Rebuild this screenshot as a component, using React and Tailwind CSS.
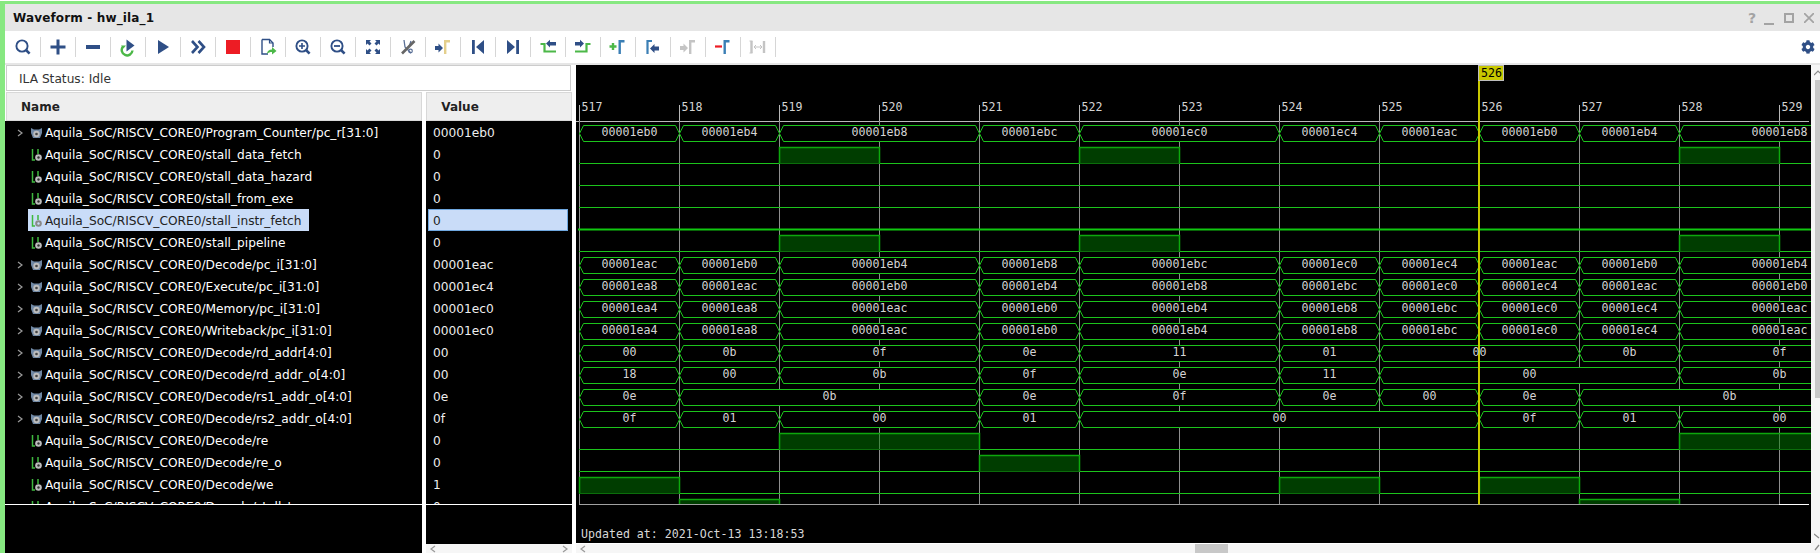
import React from 'react';
import { FaCog } from 'react-icons/fa';

const NAVY = '#2f4f86';
const GRN = '#4cb848';
const MK = '#3b7fb5';
const GY = '#c4c4c4';

const Mag = ({ children }) => (
  <>
    <circle cx="9" cy="9" r="5.6" fill="none" stroke={NAVY} strokeWidth="1.9" />
    <path d="M13 13l3.6 3.6" stroke={NAVY} strokeWidth="2.6" />
    {children}
  </>
);
const Marker = ({ x = 11, c = MK }) => <path d={`M${x + 1.2} 17V4.2H${x + 6}`} fill="none" stroke={c} strokeWidth="2.4" />;
const ArrowR = ({ x, y, c = NAVY }) => <path d={`M${x} ${y - 2}h3.5v-2.6l4.5 4.6-4.5 4.6V${y + 2}H${x}z`} fill={c} />;

const icons = [
  <Mag />,
  <path d="M2.5 8.5h6v-6h3v6h6v3h-6v6h-3v-6h-6z" fill={NAVY} />,
  <rect x="3" y="8" width="14" height="4" fill={NAVY} />,
  <>
    <path d="M5 9.5a5.4 5.4 0 1 0 9.5 4" fill="none" stroke={GRN} strokeWidth="2.4" />
    <path d="M3 8.5h5l-2.5 3z" fill={GRN} />
    <path d="M8.5 2.5l8 6-8 6z" fill={NAVY} />
  </>,
  <path d="M5 3l11 7-11 7z" fill={NAVY} />,
  <path d="M4 4l5.5 6L4 16M10.5 4l5.5 6-5.5 6" fill="none" stroke={NAVY} strokeWidth="2.6" />,
  <rect x="3" y="3" width="14" height="14" fill="#ed1c24" />,
  <>
    <path d="M4 2.5h7.5l3.5 3.5v4M4 2.5v14.5h6" fill="none" stroke={NAVY} strokeWidth="1.4" />
    <path d="M11.5 2.5V6H15" fill="none" stroke={NAVY} strokeWidth="1.2" />
    <path d="M9 17c0-3 2-4.5 5-4.5V10l4.5 4-4.5 3.500V15c-2 0-3.500.5-5 2z" fill={GRN} />
  </>,
  <Mag><path d="M6 9h6M9 6v6" stroke={NAVY} strokeWidth="1.6" /></Mag>,
  <Mag><path d="M6 9h6" stroke={NAVY} strokeWidth="1.8" /></Mag>,
  <path d="M3 3h5L6.500 4.500 8.500 6.500 6.500 8.500 4.500 6.500 3 8zM17 3v5L15.500 6.500 13.500 8.500 11.500 6.500 13.500 4.500 12 3zM3 17v-5l1.500 1.500 2-2 2 2-2 2L8 17zM17 17h-5l1.500-1.500-2-2 2-2 2 2L17 12z" fill={NAVY} />,
  <>
    <path d="M6 3l1 7 6 6M13 4l-2 6" fill="none" stroke="#5a6f96" strokeWidth="1.3" />
    <path d="M4 16.500L16.500 4" stroke="#666" strokeWidth="2.6" />
    <circle cx="12.500" cy="14" r="1.800" fill="none" stroke="#5a6f96" strokeWidth="1.200" />
  </>,
  <><ArrowR x={2} y={11} /><Marker x={11} c="#e4cf8c" /></>,
  <path d="M4 3h2.800v14H4zM16 3v14L8 10z" fill={NAVY} />,
  <path d="M16 3h-2.800v14H16zM4 3v14l8-7z" fill={NAVY} />,
  <>
    <path d="M2.500 7h4v7.500h11.500" fill="none" stroke={GRN} strokeWidth="2.200" />
    <path d="M8 6.500l4-3.700V5h6v3.500h-6v2z" fill={NAVY} />
  </>,
  <>
    <path d="M2 14.500h11.500V7h4" fill="none" stroke={GRN} strokeWidth="2.200" />
    <path d="M11 6.500L7 2.800V5H2v3.500h5v2z" fill={NAVY} />
  </>,
  <>
    <path d="M1.500 9.500h7M5 6v7" stroke={GRN} strokeWidth="2.400" />
    <Marker x={10.500} />
  </>,
  <>
    <path d="M4.500 17V4H9" fill="none" stroke={MK} strokeWidth="2.200" />
    <path d="M7 11.500l4.500-4.500v2.500H16v4h-4.500V16z" fill={NAVY} />
  </>,
  <><ArrowR x={2} y={11} c={GY} /><Marker x={11} c={GY} /></>,
  <>
    <path d="M2 9.500h7" stroke="#ed1c24" strokeWidth="2.200" />
    <Marker x={10.500} />
  </>,
  <>
    <path d="M3.500 4v12M16 4v12" stroke={GY} strokeWidth="2.400" />
    <path d="M1.500 4h3M1.500 16h3" stroke={GY} strokeWidth="1" />
    <path d="M6 10h8M6 10l2-2M6 10l2 2M14 10l-2-2M14 10l-2 2" stroke={GY} strokeWidth="1" fill="none" />
  </>,
];

const rows = [
  ['Program_Counter/pc_r[31:0]', '00001eb0', 1],
  ['stall_data_fetch', '0'],
  ['stall_data_hazard', '0'],
  ['stall_from_exe', '0'],
  ['stall_instr_fetch', '0'],
  ['stall_pipeline', '0'],
  ['Decode/pc_i[31:0]', '00001eac', 1],
  ['Execute/pc_i[31:0]', '00001ec4', 1],
  ['Memory/pc_i[31:0]', '00001ec0', 1],
  ['Writeback/pc_i[31:0]', '00001ec0', 1],
  ['Decode/rd_addr[4:0]', '00', 1],
  ['Decode/rd_addr_o[4:0]', '00', 1],
  ['Decode/rs1_addr_o[4:0]', '0e', 1],
  ['Decode/rs2_addr_o[4:0]', '0f', 1],
  ['Decode/re', '0'],
  ['Decode/re_o', '0'],
  ['Decode/we', '1'],
  ['Decode/stall_t', '0'],
];

const h = (s) => s.split(' ').map((t) => {
  const [v, n] = t.split(':');
  return [v.length === 3 ? '00001' + v : v, Number(n || 1)];
});

const waves = [
  h('eb0 eb4 eb8:2 ebc ec0:2 ec4 eac eb0 eb4 eb8:2'),
  [[2, 3], [5, 6], [11, 12]],
  [],
  [],
  'thick',
  [[2, 3], [5, 6], [11, 12]],
  h('eac eb0 eb4:2 eb8 ebc:2 ec0 ec4 eac eb0 eb4:2'),
  h('ea8 eac eb0:2 eb4 eb8:2 ebc ec0 ec4 eac eb0:2'),
  h('ea4 ea8 eac:2 eb0 eb4:2 eb8 ebc ec0 ec4 eac:2'),
  h('ea4 ea8 eac:2 eb0 eb4:2 eb8 ebc ec0 ec4 eac:2'),
  h('00 0b 0f:2 0e 11:2 01 00:2 0b 0f:2'),
  h('18 00 0b:2 0f 0e:2 11 00:3 0b:2'),
  h('0e 0b:3 0e 0f:2 0e 00 0e 0b:3'),
  h('0f 01 00:2 01 00:4 0f 01 00:2'),
  [[2, 4], [11, 14]],
  [[4, 5]],
  [[0, 1], [7, 8], [9, 10]],
  [[1, 2], [10, 11]],
];

const X = (k) => 579.5 + 100 * k;
const LINE = '#1cc41c';

function BusIcon() {
  return (
    <svg width="13" height="12" viewBox="0 0 13 12" className="shrink-0">
      <path d="M1 1l3 1.500h5L12 1v5l-2 5H3L1 6z" fill="#6f87a3" />
      <circle cx="6.500" cy="7" r="3.200" fill="#bdbdbd" />
      <circle cx="6.500" cy="7" r="1.300" fill="#444" />
    </svg>
  );
}
function BitIcon({ light }) {
  return (
    <svg width="13" height="14" viewBox="0 0 13 14" className="shrink-0">
      <path d="M2.500 1v11h2.500M8 1v5" fill="none" stroke="#3fb83f" strokeWidth="1.500" />
      <circle cx="8.500" cy="9.500" r="3.300" fill={light ? '#8a8a8a' : '#bdbdbd'} />
      <circle cx="8.500" cy="9.500" r="1.200" fill={light ? '#c9dcf8' : '#333'} />
    </svg>
  );
}

function Wave() {
  const bars = [];
  const rails = [];
  const buses = [];
  const labels = [];
  waves.forEach((w, n) => {
    const top = 125.5 + 22 * n;
    const bot = 141.5 + 22 * n;
    if (w === 'thick') {
      rails.push(<path key={n} d={`M578 ${bot}H1811`} stroke="#10c810" strokeWidth="2" />);
    } else if (typeof w[0]?.[0] === 'string') {
      let k = 0;
      w.forEach(([label, len], i) => {
        const a = X(k);
        const b = X(k + len);
        const c = (top + bot) / 2;
        buses.push(
          <polygon key={`${n}-${i}`} points={`${a},${c} ${a + 4},${top} ${b - 4},${top} ${b},${c} ${b - 4},${bot} ${a + 4},${bot}`} fill="#000" stroke={LINE} strokeWidth="1" />
        );
        labels.push(
          <text key={`${n}-${i}`} x={(a + b) / 2} y={c + 2.500} textAnchor="middle" fill="#d4d4d4" style={{ fontFamily: '"DejaVu Sans Mono", monospace', fontSize: '11.600px' }}>{label}</text>
        );
        k += len;
      });
    } else {
      rails.push(<path key={n} d={`M579 ${bot}H1811`} stroke={LINE} strokeWidth="1" />);
      w.forEach(([s, e], i) => {
        const a = X(s);
        const b = Math.min(X(e), 1813);
        bars.push(
          <g key={`${n}-${i}`}>
            <rect x={a} y={top} width={b - a} height={16} fill="#008000" fillOpacity="0.48" />
            <path d={`M${b} ${bot}V${top}H${a}V${bot}`} fill="none" stroke="#0da80d" strokeWidth="1.500" />
            <path d={`M${a} ${bot}H${b}`} stroke="#0b6d0b" strokeWidth="1" />
          </g>
        );
      });
    }
  });
  const ticks = Array.from({ length: 13 }, (_, i) => i);
  return (
    <svg width="1235" height="478" viewBox="576 65 1235 478" className="block">
      <defs>
        <clipPath id="wv"><rect x="576" y="121" width="1235" height="383" /></clipPath>
      </defs>
      <rect x="576" y="65" width="1235" height="478" fill="#000" />
      <path d="M576 121.500H1809" stroke="#b8b8b8" strokeWidth="1" />
      <path d="M579 504.500H1779" stroke="#a0a0a0" strokeWidth="1" />
      <path d="M1779 504.500H1809" stroke="#fff" strokeWidth="1" />
      {ticks.map((i) => (
        <g key={i}>
          <path d={`M${X(i)} 105V121`} stroke="#b8b8b8" strokeWidth="1" />
          <path d={`M${X(i)} 121V504`} stroke="#8f8f8f" strokeWidth="1" />
          <text x={X(i) + 2} y="111" fill="#d4d4d4" style={{ fontFamily: '"DejaVu Sans Mono", monospace', fontSize: '11.600px' }}>{517 + i}</text>
        </g>
      ))}
      <g clipPath="url(#wv)">
        {rails}
        {bars}
        {buses}
      </g>
      <rect x="1478" y="80" width="2" height="424.500" fill="#c8c800" />
      <g clipPath="url(#wv)">{labels}</g>
      <rect x="1478.500" y="65.500" width="25" height="15" fill="#c8c800" stroke="#bdbdbd" strokeWidth="1" />
      <text x="1481" y="77" fill="#000" style={{ fontFamily: '"DejaVu Sans Mono", monospace', fontSize: '11.600px' }}>526</text>
      <text x="581" y="538" fill="#d8d8d8" style={{ fontFamily: '"DejaVu Sans Mono", monospace', fontSize: '11.600px' }}>Updated at: 2021-Oct-13 13:18:53</text>
    </svg>
  );
}

const Chev = ({ dir = 'l', color = '#9a9a9a' }) => (
  <svg width="6" height="8" viewBox="0 0 6 8" className="shrink-0">
    <path d={dir === 'l' ? 'M5 1L1 4l4 3' : 'M1 1l4 3-4 3'} fill="none" stroke={color} strokeWidth="1.200" />
  </svg>
);

export default function App() {
  const sans = { fontFamily: '"DejaVu Sans", sans-serif' };
  return (
    <div className="w-[1820px] h-[553px] bg-white overflow-hidden pt-px" style={sans}>
      <div className="h-[552px] flex flex-col border-t-[3px] border-l-[5px] border-[#87e881]">
        <div className="h-[27px] shrink-0 bg-[#e6e6e6] flex items-center pl-2 pr-1.5">
          <span className="text-[12px] font-bold text-[#111] tracking-[0.15px]">Waveform - hw_ila_1</span>
          <div className="ml-auto flex items-center text-[#a3a3a3]">
            <span className="w-5 text-center text-[14px] font-bold leading-none pl-[6px]">?</span>
            <div className="w-5 h-[15px] flex items-end justify-center"><div className="w-[10px] h-[2px] bg-[#a3a3a3]" /></div>
            <div className="w-5 flex justify-center"><div className="w-[10px] h-[10px] border-2 border-[#a3a3a3]" /></div>
            <svg width="10" height="10" viewBox="0 0 10 10" className="ml-[5px]"><path d="M0 0l10 10M10 0L0 10" stroke="#a3a3a3" strokeWidth="1.700" /></svg>
          </div>
        </div>
        <div className="h-[32px] shrink-0 bg-white flex items-center pl-px pr-[5px]">
          {icons.map((ic, i) => (
            <div key={i} className="w-[35px] h-[20px] shrink-0 flex items-center justify-center border-r border-[#d6d6d6]">
              <svg width="20" height="20" viewBox="0 0 20 20">{ic}</svg>
            </div>
          ))}
          <FaCog className="ml-auto text-[14px] text-[#2f4f86]" />
        </div>
        <div className="h-[2px] shrink-0 bg-[#e6e6e6]" />
        <div className="flex-1 flex min-h-0">
          <div className="w-[567px] shrink-0 flex flex-col">
            <div className="h-[26px] shrink-0 ml-px mr-px border border-[#cccccc] flex items-center pl-[12px] pt-[2px] text-[12.200px] text-[#333]">ILA Status: Idle</div>
            <div className="mt-px h-[29px] shrink-0 flex gap-1 text-[12px] font-bold text-[#222]">
              <div className="w-[417px] ml-px bg-[#eeeeee] border border-[#d8d8d8] flex items-center pl-[14px]">Name</div>
              <div className="w-[146px] bg-[#eeeeee] border border-[#d8d8d8] flex items-center pl-[14px]">Value</div>
            </div>
            <div className="flex-1 flex gap-1 min-h-0">
              <div className="w-[417px] flex flex-col bg-black">
                <div className="h-[383px] shrink-0 overflow-hidden">
                  {rows.map(([name, , bus], i) => {
                    const sel = i === 4;
                    return (
                      <div key={i} className="h-[22px] flex items-center text-[12.200px] leading-none pl-[12px]">
                        <div className="w-[11px] shrink-0 flex pt-[2px]">{bus ? <Chev dir="r" /> : null}</div>
                        <div className={sel ? 'h-[22px] flex items-center pl-[2px] pr-[8px] bg-[#c9dcf8] text-[#222]' : 'h-[22px] flex items-center pl-[2px] text-white'}>
                          <div className="w-[15px] shrink-0 pt-[2px]">{bus ? <BusIcon /> : <BitIcon light={sel} />}</div>
                          <span className="whitespace-nowrap pt-[2px]">Aquila_SoC/RISCV_CORE0/{name}</span>
                        </div>
                      </div>
                    );
                  })}
                </div>
                <div className="h-px shrink-0 bg-white" />
              </div>
              <div className="w-[146px] flex flex-col">
                <div className="h-[383px] shrink-0 overflow-hidden bg-black">
                  {rows.map(([, val], i) => (
                    <div key={i} className="h-[22px] pr-[4px] pl-[2px] text-[12.200px]">
                      <div className={i === 4 ? 'h-[22px] flex items-center pl-[4px] pt-[2px] bg-[#c9dcf8] border border-[#6fa7df] text-[#222]' : 'h-[22px] flex items-center pl-[5px] pt-[2px] text-[#eeeeee]'}>{val}</div>
                    </div>
                  ))}
                </div>
                <div className="h-px shrink-0 bg-white" />
                <div className="h-[39px] shrink-0 bg-black" />
                <div className="flex-1 bg-[#f6f6f6] flex items-center justify-between px-[4px]">
                  <Chev />
                  <Chev dir="r" />
                </div>
              </div>
            </div>
          </div>
          <div className="w-[4px] shrink-0" />
          <div className="w-[1235px] shrink-0 flex flex-col">
            <Wave />
            <div className="flex-1 bg-[#f6f6f6] mt-px flex items-center relative px-[4px]">
              <Chev />
              <div className="absolute left-[619px] top-0 w-[33px] h-full bg-[#c8c8c8]" />
            </div>
          </div>
          <div className="flex-1 bg-[#f6f6f6] flex flex-col items-end">
            <svg width="6" height="6" viewBox="0 0 6 6" className="mt-[5px]"><path d="M0 5l4-4 2 2" fill="none" stroke="#8a8a8a" strokeWidth="1.200" /></svg>
            <div className="mt-[4px] w-[5px] h-[318px] bg-[#c8c8c8]" />
            <svg width="6" height="18" viewBox="0 0 6 18" className="mt-auto mb-[2px]"><path d="M0 1l5 4M5 12l-4 5" fill="none" stroke="#8a8a8a" strokeWidth="1.300" /></svg>
          </div>
        </div>
      </div>
    </div>
  );
}
